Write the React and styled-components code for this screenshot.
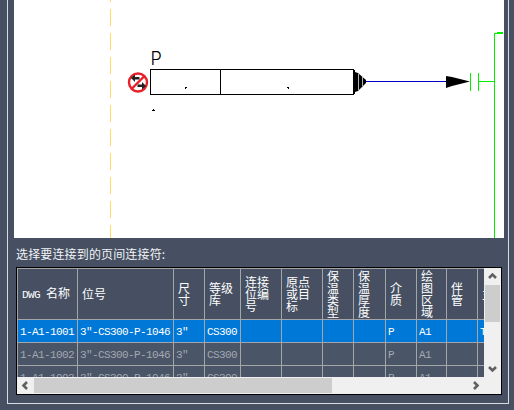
import React from 'react';
import styled, { createGlobalStyle } from 'styled-components';

const GlobalStyle = createGlobalStyle`
  html, body {
    margin: 0;
    padding: 0;
    background: #465062;
    overflow: hidden;
  }
`;

const columns = [60, 96, 31, 36, 41, 41, 31, 32, 31, 30, 31, 40];

const headers = [
  ['DWG ', '名称'],
  ['', '位号'],
  ['', '尺寸'],
  ['', '等级库'],
  ['', '连接位编号'],
  ['', '原点或目标'],
  ['', '保温类型'],
  ['', '保温厚度'],
  ['', '介质'],
  ['', '绘图区域'],
  ['', '伴管'],
  ['', '主'],
];

const rows = [
  ['1-A1-1001', '3″-CS300-P-1046', '3″', 'CS300', '', '', '', '', 'P', 'A1', '', 'T'],
  ['1-A1-1002', '3″-CS300-P-1046', '3″', 'CS300', '', '', '', '', 'P', 'A1', '', ''],
  ['1-A1-1003', '3″-CS300-P-1046', '3″', 'CS300', '', '', '', '', 'P', 'A1', '', ''],
];

const Window = styled.div`
  width: 514px;
  height: 410px;
  box-sizing: border-box;
  padding: 0 5px 6px 7px;
  background: #465062;
`;

const GroupBox = styled.div`
  height: 100%;
  box-sizing: border-box;
  display: flex;
  flex-direction: column;
  padding: 0 4px 8px 6px;
  border: 1px solid #d8dbe0;
  border-top: none;
`;

const Canvas = styled.div`
  height: 238px;
  flex: none;
  background: #fff;
  overflow: hidden;

  svg {
    display: block;
  }
`;

const Prompt = styled.div`
  height: 29px;
  flex: none;
  box-sizing: border-box;
  padding: 9px 0 0 2px;
  font: 12px/14px "Noto Sans CJK SC", sans-serif;
  letter-spacing: 0.15px;
  color: #f2f3f5;
`;

const TableFrame = styled.div`
  flex: none;
  margin-left: 2px;
  width: 486px;
  height: 128px;
  box-sizing: border-box;
  border: 1px solid #000;
  display: grid;
  grid-template-columns: 467px 17px;
  grid-template-rows: 109px 17px;
  background: #f0f0f0;
`;

const Viewport = styled.div`
  overflow: hidden;
  background: #465062;
`;

const Grid = styled.div`
  display: grid;
  width: 600px;
  grid-auto-rows: 23px;
  border-top: 1px solid #a3a5a8;
  border-left: 1px solid #a3a5a8;
  grid-template-columns: ${(p) => p.$columns.map((c) => `${c}px`).join(' ')};
  grid-template-rows: 51px;
`;

const HeadCell = styled.div`
  box-sizing: border-box;
  border-right: 1px solid #a3a5a8;
  border-bottom: 1px solid #a3a5a8;
  padding: 0 4px;
  display: flex;
  align-items: center;
  overflow: hidden;
  color: #fff;
  font: 12px/12px "Noto Sans CJK SC", sans-serif;
  word-break: break-all;
`;

const HeadLatin = styled.span`
  font: 11px/12px "Liberation Mono", monospace;
  letter-spacing: -0.6px;
  white-space: pre;
`;

const Cell = styled.div`
  box-sizing: border-box;
  border-right: 1px solid #a3a5a8;
  border-bottom: 1px solid #a3a5a8;
  padding-left: 2px;
  overflow: hidden;
  white-space: nowrap;
  font: 11px/24px "Liberation Mono", monospace;
  letter-spacing: -0.6px;
  background: ${(p) => (p.$selected ? '#0078d7' : '#4a5568')};
  color: ${(p) => (p.$selected ? '#fff' : '#a4a8b0')};
`;

const ScrollTrack = styled.div`
  display: flex;
  flex-direction: ${(p) => (p.$vertical ? 'column' : 'row')};
  align-items: stretch;
  background: #f0f0f0;
`;

const ScrollButton = styled.div`
  flex: none;
  width: 17px;
  height: 17px;
  display: flex;
  align-items: center;
  justify-content: center;

  svg {
    display: block;
  }
`;

const ScrollGap = styled.div`
  flex: ${(p) => (p.$size ? `0 0 ${p.$size}px` : '1')};
  background: ${(p) => (p.$thumb ? '#cdcdcd' : 'transparent')};
  margin: ${(p) => (p.$thumb ? (p.$vertical ? '0 1px' : '1px 0') : 0)};
`;

const Chevron = ({ rotate }) => (
  <svg width="9" height="9" viewBox="0 0 9 9" style={{ transform: `rotate(${rotate}deg)` }}>
    <path d="M6 1 L2.5 4.5 L6 8" fill="none" stroke="#606060" strokeWidth="2.6" />
  </svg>
);

// the drawing area, viewBox keeps page pixel coordinates
const Drawing = () => (
  <svg width="489" height="238" viewBox="14 0 489 238">
    <line x1="110.5" y1="0" x2="110.5" y2="238" stroke="#ffd966" strokeWidth="1" strokeDasharray="17 7" strokeDashoffset="15" />
    <text x="150.5" y="65" fontFamily="Inter, sans-serif" fontSize="18" fontWeight="300" fill="#000">P</text>

    <g shapeRendering="crispEdges" fill="none" stroke="#000" strokeWidth="1">
      <rect x="150.5" y="69.5" width="203" height="25" />
      <line x1="220.5" y1="70" x2="220.5" y2="94" />
      <line x1="354.5" y1="70" x2="354.5" y2="94" />
    </g>
    <g shapeRendering="crispEdges" fill="#000">
      <rect x="185" y="87" width="2" height="1" />
      <rect x="185" y="88" width="1" height="1" />
      <rect x="287" y="87" width="2" height="1" />
      <rect x="288" y="88" width="1" height="1" />
      <rect x="153" y="109" width="1" height="1" />
      <rect x="152" y="110" width="3" height="1" />
    </g>

    <g>
      <path d="M355 72 L358 73 L366 80 L366 83 L358 91 L355 92 Z" fill="#000" />
      <path d="M358.5 74 V90 M362.5 77 V86" stroke="#fff" strokeWidth="0.7" fill="none" />
    </g>
    <line x1="366" y1="81.5" x2="446" y2="81.5" stroke="#0000c8" strokeWidth="1" shapeRendering="crispEdges" />
    <path d="M446 76 L452 77 L460 79 L470 81.5 L460 84 L452 86 L446 88 Z" fill="#000" />

    <g shapeRendering="crispEdges" stroke="#00f000" strokeWidth="1" fill="none">
      <line x1="470.5" y1="73" x2="470.5" y2="91" />
      <line x1="478.5" y1="73" x2="478.5" y2="91" />
      <line x1="478" y1="81.5" x2="494" y2="81.5" />
      <line x1="494.5" y1="33" x2="494.5" y2="238" />
      <line x1="494" y1="33.5" x2="503" y2="33.5" />
      <line x1="497" y1="32.5" x2="503" y2="32.5" />
    </g>

    <circle cx="138" cy="82.5" r="9" fill="#fff" stroke="#e8202a" strokeWidth="2.4" />
    <path d="M131.5 89 L145 75.5" stroke="#e8202a" strokeWidth="2.4" />
    <path d="M131 78 L135 74.5 V77 H139.5 V79.5 H135 V82 Z" fill="#222" />
    <path d="M146 86 L142 89.5 V87 H137.5 V84.5 H142 V82 Z" fill="#222" />
  </svg>
);

const App = () => (
  <Window>
    <GlobalStyle />
    <GroupBox>
      <Canvas>
        <Drawing />
      </Canvas>
      <Prompt>选择要连接到的页间连接符:</Prompt>
      <TableFrame>
        <Viewport>
          <Grid $columns={columns}>
            {headers.map(([latin, text]) => (
              <HeadCell key={text}>
                <span>
                  {latin && <HeadLatin>{latin}</HeadLatin>}
                  {text}
                </span>
              </HeadCell>
            ))}
            {rows.map((row, r) =>
              row.map((value, c) => (
                <Cell key={`${r}-${c}`} $selected={r === 0}>
                  {value}
                </Cell>
              ))
            )}
          </Grid>
        </Viewport>
        <ScrollTrack $vertical>
          <ScrollButton>
            <Chevron rotate={90} />
          </ScrollButton>
          <ScrollGap $thumb $vertical $size={37} />
          <ScrollGap />
          <ScrollButton>
            <Chevron rotate={-90} />
          </ScrollButton>
        </ScrollTrack>
        <ScrollTrack>
          <ScrollButton>
            <Chevron rotate={0} />
          </ScrollButton>
          <ScrollGap $thumb $size={298} />
          <ScrollGap />
          <ScrollButton>
            <Chevron rotate={180} />
          </ScrollButton>
        </ScrollTrack>
        <ScrollTrack />
      </TableFrame>
    </GroupBox>
  </Window>
);

export default App;
